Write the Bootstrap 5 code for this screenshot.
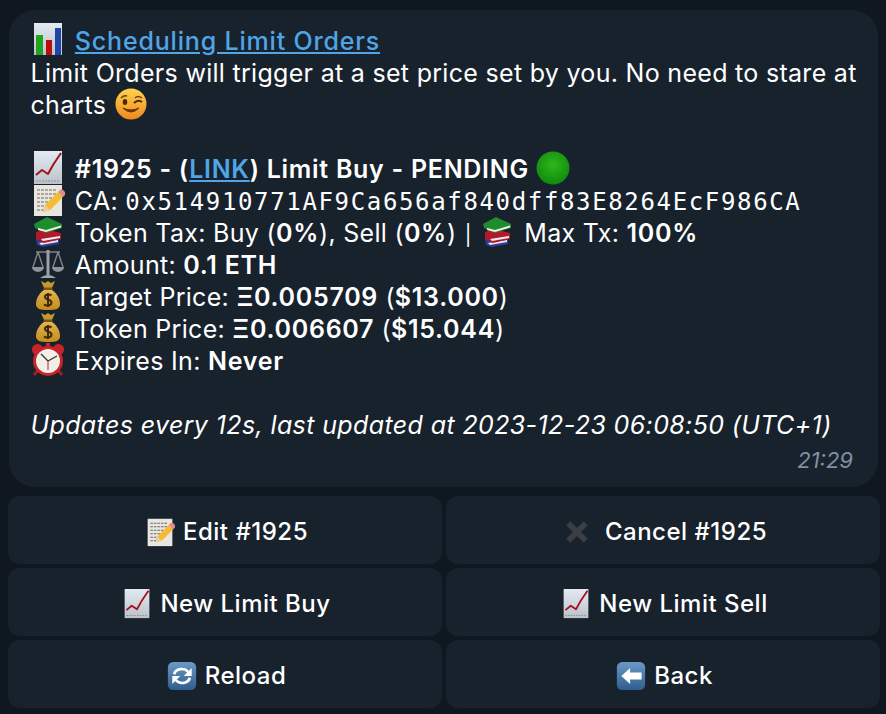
<!DOCTYPE html>
<html lang="en">
<head>
  <meta charset="UTF-8">
  <meta name="viewport" content="width=device-width, initial-scale=1.0">
  <title>Scheduling Limit Orders</title>
  <link href="https://cdn.jsdelivr.net/npm/bootstrap@5.3.0/dist/css/bootstrap.min.css" rel="stylesheet">
  <style>
    body {
      background: #0f1721;
      color: #fff;
      font-family: Inter, "Liberation Sans", sans-serif;
      overflow: hidden;
    }
    .sprite-defs { display: block; width: 0; height: 0; }
    .chat-wrap { padding: 10px 6px 0 8px; }
    .msg-bubble {
      background: #18222d;
      border-radius: 26px;
      margin: 0 2px 9px 1px;
      padding: 15px 22px 12px 21.500px;
      font-size: 25px;
      letter-spacing: .3px;
      line-height: 32px;
      height: 477px;
    }
    .msg-bubble a { color: #50a5e6; }
    .msg-head { font-weight: 500; letter-spacing: .82px; }
    .msg-line { height: 32px; white-space: nowrap; }
    .msg-line b { font-weight: 600; letter-spacing: .72px; }
    .msg-note { letter-spacing: .38px; }
    .pipe-mark { font-size: 20px; margin: 0 1px; }
    .ca-text {
      font-family: "DejaVu Sans Mono", monospace;
      font-size: 24px;
      letter-spacing: 1.65px;
    }
    .emo {
      width: 34px;
      height: 34px;
      vertical-align: -3px;
      margin: -4px 0;
    }
    .emo-gap { margin-right: 3px; }
    .msg-time {
      color: #7f90a2;
      font-size: 22px;
      font-style: italic;
      letter-spacing: 0;
      line-height: 26px;
      text-align: right;
      padding-right: 3px;
      margin-top: 6px;
    }
    .kb-btn {
      background: #18222d;
      border: 0;
      border-radius: 12px;
      color: #fff;
      font-size: 24px;
      font-weight: 500;
      letter-spacing: .5px;
      height: 68px;
      width: 100%;
      display: flex;
      align-items: center;
      justify-content: center;
      gap: 8px;
      padding: 3px 0 0 3px;
    }
    .kb-btn .emo { margin: 0; vertical-align: 0; width: 30px; height: 30px; }
    .kb-btn .emo-wide { margin-right: 5px; }
  </style>
</head>
<body>
  <svg class="sprite-defs" xmlns="http://www.w3.org/2000/svg">
    <defs>
      <linearGradient id="pageGrad" x1="0" y1="0" x2="0" y2="1">
        <stop offset="0" stop-color="#e4eaf2"/><stop offset="1" stop-color="#bcc2ca"/>
      </linearGradient>
      <linearGradient id="wlGrad" x1="0" y1="0" x2="0" y2="1">
        <stop offset="0" stop-color="#ffd34e"/><stop offset="1" stop-color="#ee8a1c"/>
      </linearGradient>
      <radialGradient id="greenGrad" cx=".5" cy=".4" r=".6">
        <stop offset="0" stop-color="#2fb81c"/><stop offset="1" stop-color="#0f8a0b"/>
      </radialGradient>
      <linearGradient id="tileGrad" x1="0" y1="0" x2="0" y2="1">
        <stop offset="0" stop-color="#6b9ac6"/><stop offset="1" stop-color="#2f5d8c"/>
      </linearGradient>
      <linearGradient id="bagGrad" x1="0" y1="0" x2="0" y2="1">
        <stop offset="0" stop-color="#e3b64e"/><stop offset="1" stop-color="#c48a1e"/>
      </linearGradient>
    </defs>
    <symbol id="e-bars" viewBox="0 0 34 34">
      <rect x="3" y="0" width="28" height="32" fill="url(#pageGrad)"/>
      <rect x="5" y="12" width="7" height="20" fill="#1fa51f"/>
      <rect x="15" y="17" width="6" height="15" fill="#b80d0d"/>
      <rect x="24" y="5" width="6" height="27" fill="#1d46a8"/>
    </symbol>
    <symbol id="e-chart" viewBox="0 0 34 34">
      <rect x="3" y="0" width="28" height="33" fill="url(#pageGrad)"/>
      <path d="M5 24 11 19 17 23 22 14 30 2" fill="none" stroke="#a3121c" stroke-width="2" stroke-linejoin="round"/>
      <path d="M5 30h24" stroke="#8b8f96" stroke-width="1" stroke-dasharray="2 1"/>
    </symbol>
    <symbol id="e-memo" viewBox="0 0 34 34">
      <rect x="3" y="2" width="28" height="31" fill="#e8e6df"/>
      <path d="M6 7h20M6 11h22M6 15h17M6 19h13M6 23h11M6 27h8" stroke="#6b6b6b" stroke-width="1.2" stroke-dasharray="3 1"/>
      <path d="M12 29 14 22 27 9 32 14 19 27Z" fill="#f4bb33"/>
      <path d="M27 9 29 7a2 2 0 0 1 3 0l2 2a2 2 0 0 1 0 3l-2 2Z" fill="#e58a8a"/>
      <path d="M12 29 14 22 19 27Z" fill="#e9cfa2"/>
    </symbol>
    <symbol id="e-books" viewBox="0 0 34 34">
      <path d="M5 24 14 20 28 23 28 29 12 32 6 30Z" fill="#2b3d96"/>
      <path d="M8 28 27 25 27 27 10 30Z" fill="#e6e6ec"/>
      <path d="M5 17 14 14 30 18 30 24 13 28 5 24Z" fill="#b3192b"/>
      <path d="M10 24 29 21 29 23 12 26Z" fill="#eee"/>
      <path d="M3 9 16 2 31 9 31 13 15 18 4 13Z" fill="#1f8d2e"/>
      <path d="M7 13 15 15 30 10.500 30 12.500 15 17 7 15Z" fill="#f0f0e8"/>
    </symbol>
    <symbol id="e-scales" viewBox="0 0 34 34">
      <g fill="none" stroke="#7f858d" stroke-width="1.4">
        <path d="M5 5H29M7 5 2 20M7 5 12 20M27 5 22 20M27 5 32 20"/>
      </g>
      <path d="M1 20H13A6 5 0 0 1 1 20ZM21 20H33A6 5 0 0 1 21 20Z" fill="#8e949c"/>
      <path d="M9 31Q17 25 25 31Z" fill="#a2a7ae"/>
      <rect x="15.500" y="3" width="3" height="26" fill="#9aa0a7"/>
    </symbol>
    <symbol id="e-bag" viewBox="0 0 34 34">
      <path d="M10 2 14 4 17 2 20 4 24 2 21 9H13Z" fill="#c59632"/>
      <rect x="12.500" y="8.500" width="9" height="3" rx="1" fill="#7a5313"/>
      <path d="M13 11H21C27 15 29 21 29 25 29 30 25 31 17 31 9 31 5 30 5 25 5 21 7 15 13 11Z" fill="url(#bagGrad)"/>
      <path d="M20.500 16.500C19 15 14 15 14 18S20.500 20 20.500 23.500 15 27 13 25.500M17 14V28" fill="none" stroke="#3a2a0e" stroke-width="2"/>
    </symbol>
    <symbol id="e-clock" viewBox="0 0 34 34">
      <circle cx="6.500" cy="6.500" r="5.500" fill="#c8242a"/>
      <circle cx="27.500" cy="6.500" r="5.500" fill="#c8242a"/>
      <rect x="15" y="0" width="4" height="4" fill="#c8242a"/>
      <path d="M7 27 3 32M27 27 31 32" stroke="#9d1e22" stroke-width="3"/>
      <circle cx="17" cy="18" r="15" fill="#c8242a"/>
      <circle cx="17" cy="18" r="12" fill="#f1efe9"/>
      <path d="M17 18 10 11M17 18 26 13" stroke="#333" stroke-width="1.300"/>
      <path d="M17 18V27" stroke="#b52024" stroke-width="1"/>
    </symbol>
    <symbol id="e-wink" viewBox="0 0 34 34">
      <circle cx="17" cy="17" r="15.500" fill="url(#wlGrad)"/>
      <path d="M7 11Q10 8 13 9M21 11Q24 8 28 11" fill="none" stroke="#6b3d0a" stroke-width="1.400"/>
      <ellipse cx="11" cy="15" rx="2.300" ry="3" fill="#4a2a08"/>
      <path d="M20 16Q24 12 28 15" fill="none" stroke="#4a2a08" stroke-width="2"/>
      <path d="M9 21Q17 29 25 21Q17 25 9 21Z" fill="#6b3208" stroke="#6b3208" stroke-width="1"/>
    </symbol>
    <symbol id="e-green" viewBox="0 0 34 34">
      <circle cx="17" cy="17" r="16.500" fill="url(#greenGrad)"/>
    </symbol>
    <symbol id="e-cross" viewBox="0 0 34 34">
      <path d="M7 7 27 27M27 7 7 27" stroke="#3b3e42" stroke-width="6.500"/>
    </symbol>
    <symbol id="e-reload" viewBox="0 0 34 34">
      <rect x="1" y="1" width="32" height="32" rx="6" fill="url(#tileGrad)"/>
      <path d="M8 15A9 8 0 0 1 24 12.500M26 19A9 8 0 0 1 10 21.500" fill="none" stroke="#fff" stroke-width="3"/>
      <path d="M28 8V17H19ZM6 26V17H15Z" fill="#fff"/>
    </symbol>
    <symbol id="e-back" viewBox="0 0 34 34">
      <rect x="1" y="1" width="32" height="32" rx="6" fill="url(#tileGrad)"/>
      <path d="M6 17 16 8V13H29V21H16V26Z" fill="#fff"/>
    </symbol>
  </svg>

  <div class="chat-wrap">
    <div class="msg-bubble">
      <div class="msg-line"><svg class="emo emo-gap"><use href="#e-bars"/></svg> <a href="#" class="msg-head">Scheduling Limit Orders</a></div>
      <div class="msg-line">Limit Orders will trigger at a set price set by you. No need to stare at</div>
      <div class="msg-line">charts <svg class="emo"><use href="#e-wink"/></svg></div>
      <div class="msg-line"></div>
      <div class="msg-line"><svg class="emo emo-gap"><use href="#e-chart"/></svg> <b>#1925 - (<a href="#">LINK</a>) Limit Buy - PENDING</b> <svg class="emo"><use href="#e-green"/></svg></div>
      <div class="msg-line"><svg class="emo emo-gap"><use href="#e-memo"/></svg> CA: <span class="ca-text">0x514910771AF9Ca656af840dff83E8264EcF986CA</span></div>
      <div class="msg-line"><svg class="emo emo-gap"><use href="#e-books"/></svg> Token Tax: Buy (<b>0%</b>), Sell (<b>0%</b>) <span class="pipe-mark">|</span> <svg class="emo emo-gap"><use href="#e-books"/></svg> Max Tx: <b>100%</b></div>
      <div class="msg-line"><svg class="emo emo-gap"><use href="#e-scales"/></svg> Amount: <b>0.1 ETH</b></div>
      <div class="msg-line"><svg class="emo emo-gap"><use href="#e-bag"/></svg> Target Price: <b>Ξ0.005709</b> (<b>$13.000</b>)</div>
      <div class="msg-line"><svg class="emo emo-gap"><use href="#e-bag"/></svg> Token Price: <b>Ξ0.006607</b> (<b>$15.044</b>)</div>
      <div class="msg-line"><svg class="emo emo-gap"><use href="#e-clock"/></svg> Expires In: <b>Never</b></div>
      <div class="msg-line"></div>
      <div class="msg-line msg-note fst-italic">Updates every 12s, last updated at 2023-12-23 06:08:50 (UTC+1)</div>
      <div class="msg-time">21:29</div>
    </div>

    <div class="row g-1">
      <div class="col-6"><button class="btn kb-btn"><svg class="emo"><use href="#e-memo"/></svg>Edit #1925</button></div>
      <div class="col-6"><button class="btn kb-btn"><svg class="emo emo-wide"><use href="#e-cross"/></svg>Cancel #1925</button></div>
      <div class="col-6"><button class="btn kb-btn"><svg class="emo"><use href="#e-chart"/></svg>New Limit Buy</button></div>
      <div class="col-6"><button class="btn kb-btn"><svg class="emo"><use href="#e-chart"/></svg>New Limit Sell</button></div>
      <div class="col-6"><button class="btn kb-btn"><svg class="emo"><use href="#e-reload"/></svg>Reload</button></div>
      <div class="col-6"><button class="btn kb-btn"><svg class="emo"><use href="#e-back"/></svg>Back</button></div>
    </div>
  </div>

  <script src="https://cdn.jsdelivr.net/npm/bootstrap@5.3.0/dist/js/bootstrap.bundle.min.js"></script>
</body>
</html>
